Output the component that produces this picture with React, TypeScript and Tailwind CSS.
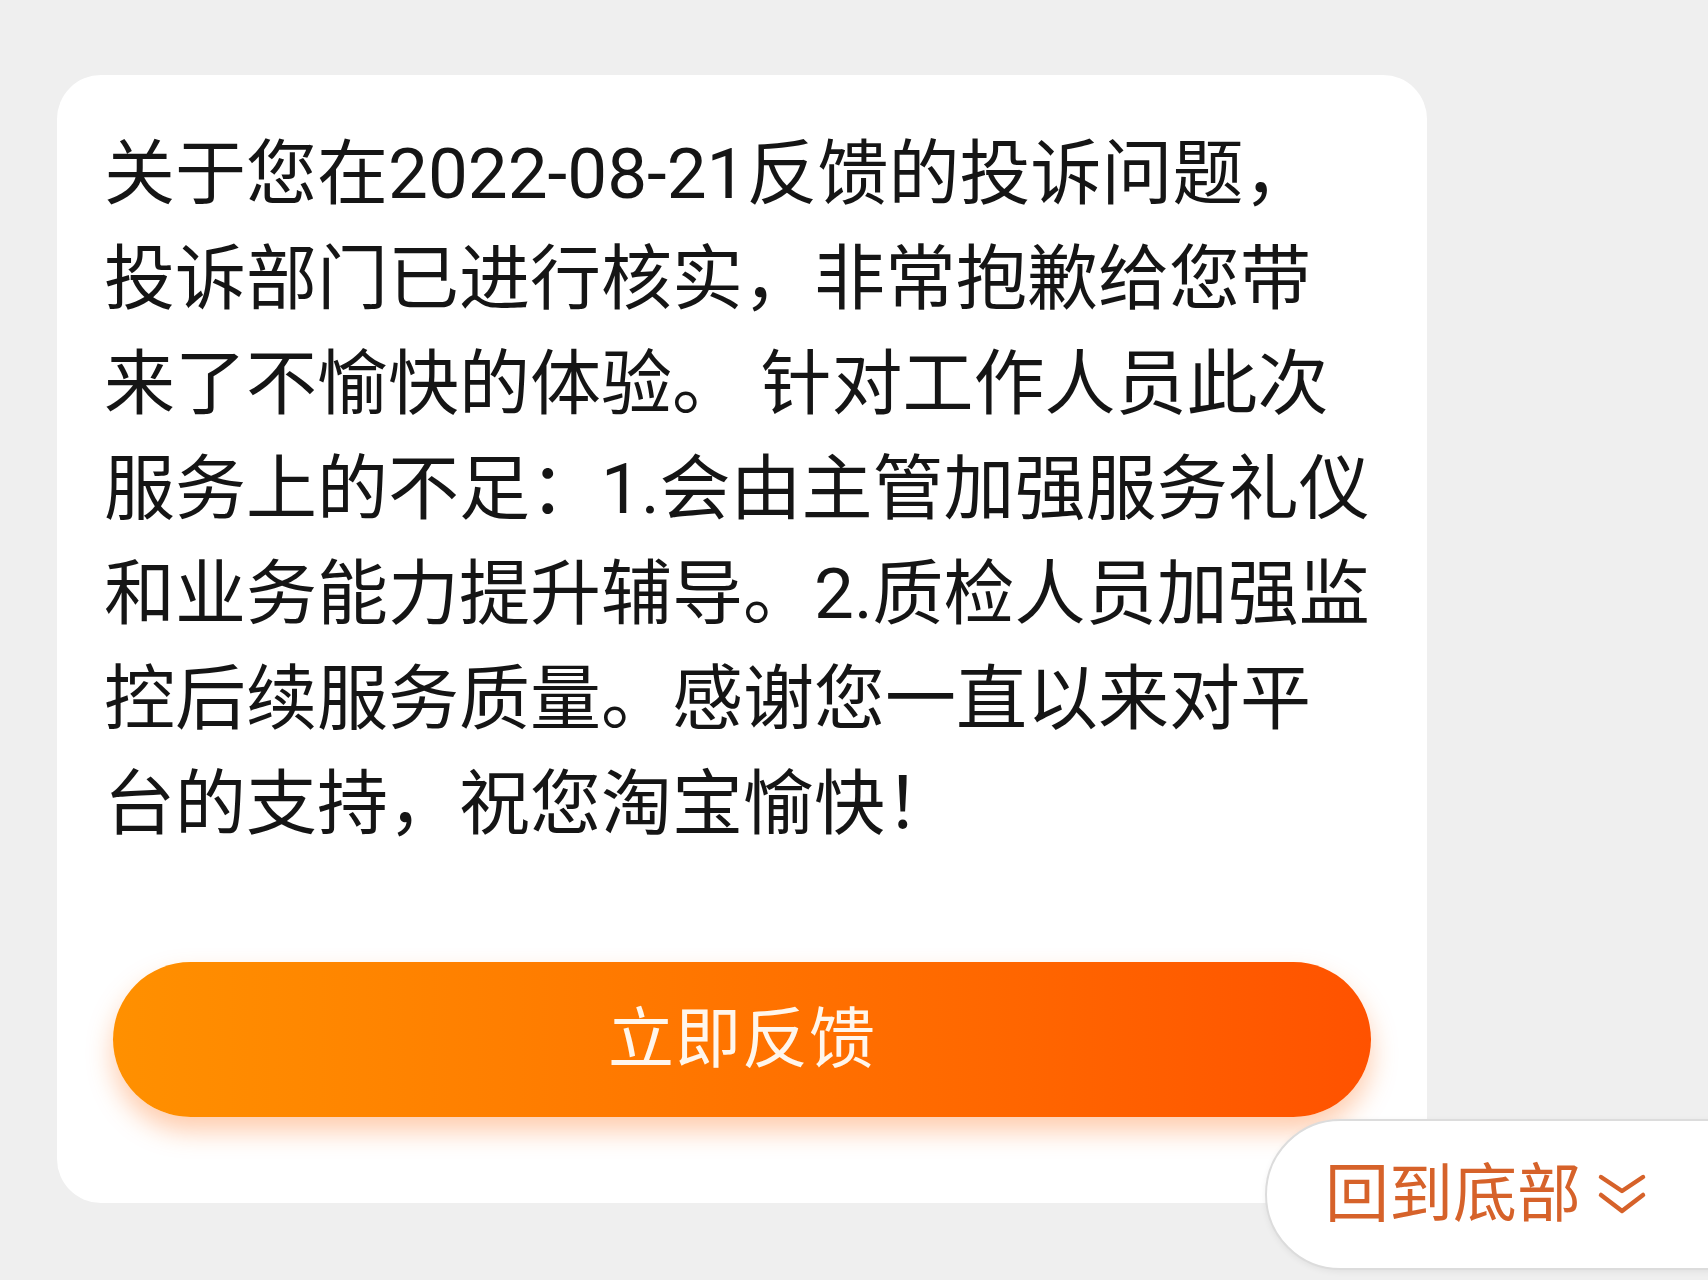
import React from 'react';

const lines = [
  '关于您在2022-08-21反馈的投诉问题，',
  '投诉部门已进行核实，非常抱歉给您带',
  '来了不愉快的体验。 针对工作人员此次',
  '服务上的不足：1.会由主管加强服务礼仪',
  '和业务能力提升辅导。2.质检人员加强监',
  '控后续服务质量。感谢您一直以来对平',
  '台的支持，祝您淘宝愉快！',
];

function DoubleChevron() {
  return (
    <svg width="50" height="44" viewBox="0 0 50 44" fill="none">
      <path d="M4 4 L25 18 L46 4" stroke="#d6622a" strokeWidth="4.5" strokeLinecap="round" strokeLinejoin="round" />
      <path d="M4 22 L25 38 L46 22" stroke="#d6622a" strokeWidth="4.5" strokeLinecap="round" strokeLinejoin="round" />
    </svg>
  );
}

export default function App() {
  return (
    <div
      className="relative w-[1708px] h-[1280px] overflow-hidden bg-[#efefef]"
      style={{ fontFamily: 'Roboto, "Noto Sans CJK SC", sans-serif' }}
    >
      <div className="flex flex-col ml-[57px] mt-[75px] w-[1370px] h-[1128px] bg-white rounded-[44px]">
        <div className="pl-[47px] pt-[46px] text-[71px] leading-[105px] text-[#151515]">
          {lines.map((l, i) => (
            <div key={i} className="whitespace-pre">
              {l}
            </div>
          ))}
        </div>

        <button className="mt-[106px] mx-[56px] h-[155px] rounded-full bg-gradient-to-r from-[#ff9000] to-[#ff5200] shadow-[0_14px_26px_rgba(255,110,20,0.35)] flex items-center justify-center">
          <span className="text-[66px] text-[#fff6ec] tracking-[1px]">立即反馈</span>
        </button>
      </div>

      <div className="absolute left-[1265px] top-[1119px] w-[480px] h-[151px] rounded-l-[76px] bg-white border-2 border-[#dcdcdc] shadow-[0_2px_6px_rgba(0,0,0,0.06)] flex items-center pl-[58px] gap-[16px]">
        <span className="text-[64px] leading-none text-[#d6622a]">回到底部</span>
        <DoubleChevron />
      </div>
    </div>
  );
}
